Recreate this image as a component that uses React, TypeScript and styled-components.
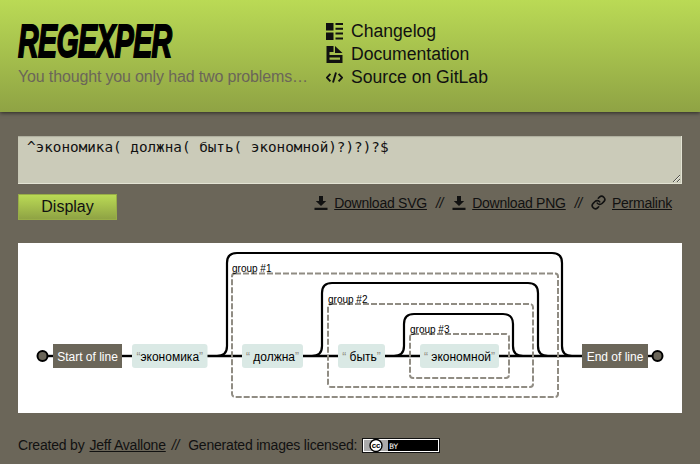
import { createGlobalStyle } from "styled-components";
import styled from "styled-components";
import { Link as LinkIcon } from "lucide-react";

const GlobalStyle = createGlobalStyle`
  html, body {
    margin: 0;
    padding: 0;
    background: #6b6659;
    overflow: hidden;
  }
  body {
    font-family: "Liberation Sans", Arial, sans-serif;
    color: #000;
  }
`;

function ChangelogIcon() {
  return (
    <NavSvg viewBox="0 0 17 17">
      <path d="M0 0h7.5v7.5H0zM0 9.5h7.5V17H0zM9.5 0H17v2H9.5zM9.5 4.8H17v2H9.5zM9.5 9.5H17v2H9.5zM9.5 14.4H17v2H9.5z" fill="#111" />
    </NavSvg>
  );
}

function DocumentIcon() {
  return (
    <NavSvg viewBox="0 0 17 17">
      <path
        fillRule="evenodd"
        d="M0.5 0h7v9h9v8H0.5zM3.5 6v3h4V6zM3.5 11.5v2.2h10.5v-2.2zM9 0l7.5 7H9z"
        fill="#111"
      />
    </NavSvg>
  );
}

function CodeIcon() {
  return (
    <NavSvg viewBox="0 0 17 17">
      <path d="M4.4 4.8L0.9 8.6l3.5 3.8M12.6 4.8l3.5 3.8-3.5 3.8M10 3.4L7 13.6" fill="none" stroke="#111" strokeWidth="1.9" />
    </NavSvg>
  );
}

function DownloadIcon() {
  return (
    <LinkSvg viewBox="0 0 14 14">
      <path d="M5 0h4v5h3.2L7 10 1.8 5H5zM0.5 11.8h13V14H0.5z" fill="#111" />
    </LinkSvg>
  );
}

function CcBadge() {
  return (
    <svg width="78" height="15" viewBox="0 0 78 15">
      <rect x="0" y="0" width="78" height="15" fill="#111" />
      <rect x="1" y="1" width="76" height="13" fill="#fff" />
      <rect x="2" y="2" width="74" height="11" fill="#000" />
      <rect x="2" y="2" width="24" height="11" fill="#aaa" />
      <circle cx="14" cy="7.5" r="6" fill="#fff" stroke="#000" strokeWidth="1.4" />
      <text x="14" y="10.2" textAnchor="middle" fontFamily="Liberation Sans" fontWeight="700" fontSize="8" fill="#000">cc</text>
      <text x="27" y="10.5" fontFamily="DejaVu Sans" fontSize="7.5" fill="#fff">BY</text>
    </svg>
  );
}

function Diagram() {
  const wires = [
    "M37 356H53",
    "M122 356H132",
    "M207 356H242",
    "M303 356H338",
    "M385 356H420",
    "M499 356H582",
    "M648 356H657",
  ];
  const loops = [
    { x0: 207, l: 227, top: 253, r: 562, x1: 582 },
    { x0: 303, l: 322, top: 283, r: 538, x1: 558 },
    { x0: 385, l: 404, top: 314, r: 513, x1: 533 },
  ];
  const groups = [
    { x: 232, y: 273.5, w: 326, h: 123.5, label: "group #1" },
    { x: 328, y: 304, w: 205, h: 83, label: "group #2" },
    { x: 410, y: 334, w: 99, h: 44, label: "group #3" },
  ];
  const literals = [
    { x: 132, w: 75.5, t: "экономика" },
    { x: 242, w: 61, t: " должна" },
    { x: 338, w: 47, t: " быть" },
    { x: 420, w: 79, t: " экономной" },
  ];

  return (
    <DiagramSvg viewBox="18 243 664 170">
      {wires.map((d) => (
        <path key={d} d={d} fill="none" stroke="#000" strokeWidth="2.4" />
      ))}
      {loops.map((p) => (
        <path
          key={p.l}
          d={`M${p.x0} 356h${p.l - p.x0 - 10}q10 0 10 -10V${p.top + 10}q0 -10 10 -10H${p.r - 10}q10 0 10 10V346q0 10 10 10H${p.x1}`}
          fill="none"
          stroke="#000"
          strokeWidth="2.2"
        />
      ))}
      {groups.map((g) => (
        <g key={g.label}>
          <rect x={g.x} y={g.y} width={g.w} height={g.h} rx="3" fill="none" stroke="#908c83" strokeWidth="2" strokeDasharray="6 2" />
          <text x={g.x} y={g.y - 1.5} fontFamily="Liberation Sans" fontSize="10" fill="#000">
            {g.label}
          </text>
        </g>
      ))}
      <circle cx="42.5" cy="356" r="5" fill="#6b6659" stroke="#000" strokeWidth="2" />
      <circle cx="657.5" cy="356" r="5" fill="#6b6659" stroke="#000" strokeWidth="2" />
      <rect x="53" y="344" width="69" height="24" fill="#6b6659" />
      <text x="87.5" y="360.5" textAnchor="middle" fontFamily="Liberation Sans" fontSize="12" fill="#fff">Start of line</text>
      <rect x="582" y="344" width="66" height="24" fill="#6b6659" />
      <text x="615" y="360.5" textAnchor="middle" fontFamily="Liberation Sans" fontSize="12" fill="#fff">End of line</text>
      {literals.map((l) => (
        <g key={l.t}>
          <rect x={l.x} y="344" width={l.w} height="24" rx="3" fill="#dae9e5" />
          <text x={l.x + l.w / 2} y="360.5" textAnchor="middle" fontFamily="Liberation Sans" fontSize="12" fill="#000" xmlSpace="preserve">
            <QuoteSpan>“</QuoteSpan>
            {l.t}
            <QuoteSpan>”</QuoteSpan>
          </text>
        </g>
      ))}
    </DiagramSvg>
  );
}

export default function App() {
  return (
    <>
      <GlobalStyle />
      <Header>
        <Brand>
          <Logo>Regexper</Logo>
          <Tagline>You thought you only had two problems…</Tagline>
        </Brand>
        <Nav>
          <NavItem>
            <ChangelogIcon />
            <span>Changelog</span>
          </NavItem>
          <NavItem>
            <DocumentIcon />
            <span>Documentation</span>
          </NavItem>
          <NavItem>
            <CodeIcon />
            <span>Source on GitLab</span>
          </NavItem>
        </Nav>
      </Header>
      <Main>
        <RegexInput readOnly spellCheck={false} value="^экономика( должна( быть( экономной)?)?)?$" />
        <Controls>
          <DisplayButton>Display</DisplayButton>
          <Links>
            <DownloadIcon />
            <TextLink>Download SVG</TextLink>
            <Sep>//</Sep>
            <DownloadIcon />
            <TextLink>Download PNG</TextLink>
            <Sep>//</Sep>
            <LinkIcon size={15} strokeWidth={2.6} color="#111" />
            <TextLink>Permalink</TextLink>
          </Links>
        </Controls>
        <Diagram />
        <Footer>
          <span>Created by</span>
          <TextLink>Jeff Avallone</TextLink>
          <FooterSep>//</FooterSep>
          <span>Generated images licensed:</span>
          <CcBadge />
        </Footer>
      </Main>
    </>
  );
}

const Header = styled.header`
  display: flex;
  gap: 18px;
  height: 112px;
  box-sizing: border-box;
  padding: 19px 18px 0;
  background: linear-gradient(to bottom, #bada55, #8fa344);
  box-shadow: 0 1px 4px rgb(0 0 0 / 0.6);
`;

const Brand = styled.div`
  display: flex;
  flex-direction: column;
  width: 290px;
`;

const Logo = styled.div`
  font-family: "Liberation Sans", sans-serif;
  font-size: 46px;
  font-weight: 700;
  font-style: italic;
  line-height: 44px;
  letter-spacing: -1px;
  text-transform: uppercase;
  color: #000;
  -webkit-text-stroke: 1.8px #000;
  transform-origin: left top;
  transform: scaleX(0.62);
`;

const Tagline = styled.div`
  margin-top: 4px;
  font-size: 16px;
  letter-spacing: -0.15px;
  line-height: 20px;
  color: #6b6659;
  white-space: nowrap;
`;

const Nav = styled.nav`
  display: flex;
  flex-direction: column;
  margin-top: 1px;
`;

const NavItem = styled.div`
  display: flex;
  align-items: center;
  gap: 8px;
  height: 23px;
  font-size: 17.6px;
  color: #111;
`;

const NavSvg = styled.svg`
  width: 17px;
  height: 17px;
  flex: none;
`;

const Main = styled.main`
  display: flex;
  flex-direction: column;
  padding: 24px 18px 0;
`;

const RegexInput = styled.textarea`
  display: block;
  box-sizing: border-box;
  width: 664px;
  height: 48px;
  margin: 0;
  padding: 2px 9px;
  border: 0;
  border-bottom: 1px solid #e3e3d4;
  border-right: 1px solid #e3e3d4;
  background: #cbcbb9;
  box-shadow: inset 0 1px 1px rgb(0 0 0 / 0.15);
  font-family: "DejaVu Sans Mono", monospace;
  font-size: 14.3px;
  line-height: 18px;
  color: #111;
  outline: none;
`;

const Controls = styled.div`
  display: flex;
  align-items: flex-start;
  justify-content: space-between;
  margin-top: 10px;
`;

const DisplayButton = styled.button`
  width: 99px;
  height: 26px;
  padding: 0;
  border: 1px solid #98ad47;
  background: linear-gradient(to bottom, #bada55, #8fa344);
  font-family: "Liberation Sans", sans-serif;
  font-size: 16px;
  color: #111;
`;

const Links = styled.div`
  display: flex;
  align-items: center;
  gap: 6px;
  height: 17px;
  font-size: 14px;
  letter-spacing: -0.25px;
  padding-right: 10px;
`;

const LinkSvg = styled.svg`
  width: 14px;
  height: 14px;
  flex: none;
`;

const TextLink = styled.a`
  color: #111;
  text-decoration: underline;
`;

const Sep = styled.span`
  margin: 0 3px;
  font-style: italic;
  color: #111;
`;

const DiagramSvg = styled.svg`
  display: block;
  width: 664px;
  height: 170px;
  margin-top: 23px;
  background: #fff;
`;

const QuoteSpan = styled.tspan`
  fill: #908c83;
`;

const Footer = styled.footer`
  display: flex;
  align-items: center;
  gap: 5px;
  margin-top: 24px;
  font-size: 14px;
  letter-spacing: -0.2px;
  color: #111;
`;

const FooterSep = styled.span`
  margin: 0 4px 0 1px;
  font-style: italic;
`;
